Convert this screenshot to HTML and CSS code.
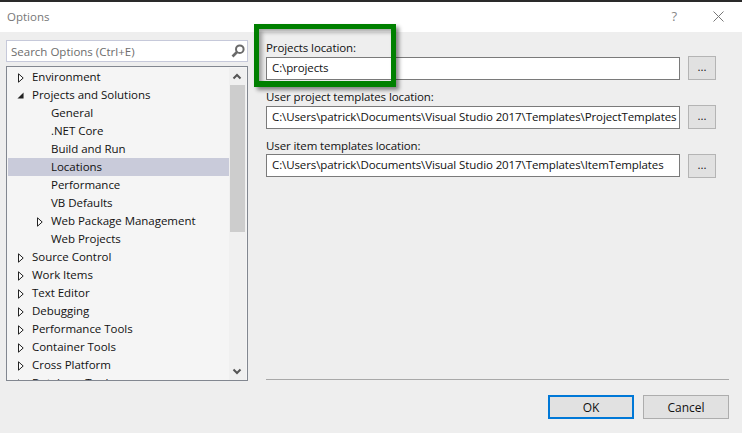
FILE: index.html
```html
<!DOCTYPE html>
<html lang="en">
<head>
  <meta charset="UTF-8">
  <title>Options</title>
  <link rel="stylesheet" href="styles.css">
</head>
<body>
  <svg class="defs" width="0" height="0">
    <symbol id="closed" viewBox="0 0 6 10"><path d="M.5 .8 5.2 5 .5 9.2Z" fill="#fff" stroke="#222"/></symbol>
    <symbol id="open" viewBox="0 0 8 8"><path d="M7.5 .5V7.5H.5Z" fill="#222"/></symbol>
  </svg>
  <div class="strip"></div>
  <header class="titlebar">
    <span class="title">Options</span>
    <span class="help">?</span>
    <svg class="close" width="11" height="11" viewBox="0 0 11 11"><path d="M.5 .5 10.5 10.5M10.5 .5 .5 10.5" stroke="#777" fill="none"/></svg>
  </header>
  <div class="dialog">
    <div class="main">
      <aside class="left">
        <div class="search">
          <span>Search Options (Ctrl+E)</span>
          <svg width="14" height="14" viewBox="0 0 14 14"><circle cx="8.8" cy="5.2" r="3.8" fill="none" stroke="#6a6a6a" stroke-width="2"/><path d="M6 8 1.5 12.5" stroke="#6a6a6a" stroke-width="2.6" fill="none"/></svg>
        </div>
        <div class="tree">
          <ul class="rows">
            <li class="row"><svg class="arrow"><use href="#closed"/></svg>Environment</li>
            <li class="row"><svg class="arrow arrow-open"><use href="#open"/></svg>Projects and Solutions</li>
            <li class="row sub">General</li>
            <li class="row sub">.NET Core</li>
            <li class="row sub">Build and Run</li>
            <li class="row sub selected">Locations</li>
            <li class="row sub">Performance</li>
            <li class="row sub">VB Defaults</li>
            <li class="row sub has-arrow"><svg class="arrow"><use href="#closed"/></svg>Web Package Management</li>
            <li class="row sub">Web Projects</li>
            <li class="row"><svg class="arrow"><use href="#closed"/></svg>Source Control</li>
            <li class="row"><svg class="arrow"><use href="#closed"/></svg>Work Items</li>
            <li class="row"><svg class="arrow"><use href="#closed"/></svg>Text Editor</li>
            <li class="row"><svg class="arrow"><use href="#closed"/></svg>Debugging</li>
            <li class="row"><svg class="arrow"><use href="#closed"/></svg>Performance Tools</li>
            <li class="row"><svg class="arrow"><use href="#closed"/></svg>Container Tools</li>
            <li class="row"><svg class="arrow"><use href="#closed"/></svg>Cross Platform</li>
            <li class="row"><svg class="arrow"><use href="#closed"/></svg>Database Tools</li>
          </ul>
          <div class="scrollbar">
            <svg class="chevron" width="16" height="17" viewBox="0 0 16 17"><path d="M4.5 10.500 8 7l3.500 3.500" fill="none" stroke="#555" stroke-width="2"/></svg>
            <div class="thumb"></div>
            <svg class="chevron chevron-down" width="16" height="18" viewBox="0 0 16 18"><path d="M4.500 7.500 8 11l3.500-3.500" fill="none" stroke="#555" stroke-width="2"/></svg>
          </div>
        </div>
      </aside>
      <section class="right">
        <div class="group">
          <label class="label">Projects location:</label>
          <div class="field-row">
            <div class="field">C:\projects</div>
            <button class="browse">...</button>
          </div>
        </div>
        <div class="group">
          <label class="label">User project templates location:</label>
          <div class="field-row">
            <div class="field">C:\Users\patrick\Documents\Visual Studio 2017\Templates\ProjectTemplates</div>
            <button class="browse">...</button>
          </div>
        </div>
        <div class="group">
          <label class="label">User item templates location:</label>
          <div class="field-row row-top">
            <div class="field">C:\Users\patrick\Documents\Visual Studio 2017\Templates\ItemTemplates</div>
            <button class="browse">...</button>
          </div>
        </div>
      </section>
    </div>
    <footer class="footer">
      <button class="btn btn-default">OK</button>
      <button class="btn">Cancel</button>
    </footer>
  </div>
  <div class="highlight"></div>
</body>
</html>
```

FILE: styles.css
```css
* {
  box-sizing: border-box;
}
html, body {
  margin: 0;
  height: 100%;
}
body {
  width: 742px;
  height: 433px;
  overflow: hidden;
  position: relative;
  display: flex;
  flex-direction: column;
  font-family: "Open Sans", "Noto Sans", Arial, sans-serif;
  font-size: 11.5px;
  color: #111;
  background-color: #f0f0f0;
}
.defs {
  position: absolute;
}
.strip {
  height: 2px;
  flex-shrink: 0;
  background-color: #2a2a2a;
}
.titlebar {
  height: 30px;
  flex-shrink: 0;
  background-color: white;
  display: flex;
  align-items: center;
  padding: 0 18px 2px 7px;
}
.title {
  flex: 1;
  font-size: 11.5px;
  color: #777;
}
.help {
  font-size: 13px;
  color: #888;
  margin-right: 36px;
}
.dialog {
  flex: 1;
  display: flex;
  flex-direction: column;
  background-color: #eeeeee;
}
.main {
  display: flex;
  padding: 8px 0 0 6px;
}
.left {
  width: 242px;
  margin-right: 18px;
  flex-shrink: 0;
}
.search {
  height: 22px;
  display: flex;
  align-items: center;
  justify-content: space-between;
  padding: 0 2px 0 4px;
  background-color: white;
  border: 1px solid #c6c9da;
  color: #6d6d6d;
}
.tree {
  height: 315px;
  margin-top: 4px;
  display: flex;
  overflow: hidden;
  padding: 1px 1px 0;
  border: 1px solid #828790;
  background-color: #f5f5f5;
}
.rows {
  flex: 1;
  list-style: none;
  margin: 0;
  padding: 0;
  overflow: hidden;
  letter-spacing: -0.03px;
}
.row {
  height: 18px;
  line-height: 18px;
  padding-left: 24px;
  position: relative;
  white-space: nowrap;
}
.row.sub {
  padding-left: 43px;
}
.row.selected {
  background-color: #c9cbda;
}
.arrow {
  position: absolute;
  left: 10px;
  top: 5px;
  width: 6px;
  height: 10px;
}
.arrow-open {
  left: 9px;
  top: 6px;
  width: 7px;
  height: 7px;
}
.has-arrow .arrow {
  left: 29px;
}
.scrollbar {
  width: 17px;
  flex-shrink: 0;
  display: flex;
  flex-direction: column;
  background-color: #f0f0f0;
}
.chevron {
  display: block;
  flex-shrink: 0;
}
.chevron-down {
  margin-top: auto;
}
.thumb {
  height: 147px;
  margin: 0 1px;
  background-color: #cdcdcd;
}
.right {
  flex: 1;
}
.group {
  margin-bottom: 9px;
}
.label {
  display: block;
  height: 16px;
  line-height: 15px;
  letter-spacing: -0.1px;
}
.field-row {
  display: flex;
  align-items: flex-end;
  gap: 8px;
  height: 24px;
}
.row-top {
  align-items: flex-start;
}
.field {
  width: 414px;
  height: 23px;
  line-height: 20px;
  padding-left: 5px;
  border: 1px solid #7a7a7a;
  background-color: white;
  white-space: nowrap;
  overflow: hidden;
  letter-spacing: -0.1px;
}
.browse {
  width: 28px;
  height: 24px;
  padding: 0 0 4px;
  font: inherit;
  color: inherit;
  border: 1px solid #b4b4b4;
  background-color: #e1e1e1;
}
.footer {
  margin-top: -2px;
  margin-left: 266px;
  margin-right: 13px;
  height: 54px;
  padding-top: 15px;
  border-top: 1px solid #a8a8a8;
  display: flex;
  justify-content: flex-end;
  gap: 9px;
}
.btn {
  width: 86px;
  height: 24px;
  padding: 0;
  font: inherit;
  font-size: 12px;
  color: inherit;
  border: 1px solid #adadad;
  background-color: #e1e1e1;
}
.btn-default {
  border: 2px solid #0078d7;
}
.highlight {
  position: absolute;
  left: 254px;
  top: 24px;
  width: 142px;
  height: 63px;
  border: 5px solid #008000;
  border-bottom-width: 6px;
  box-shadow: 3px 3px 4px rgba(0, 0, 0, 0.45), inset 3px 3px 4px rgba(0, 0, 0, 0.35);
}
```
